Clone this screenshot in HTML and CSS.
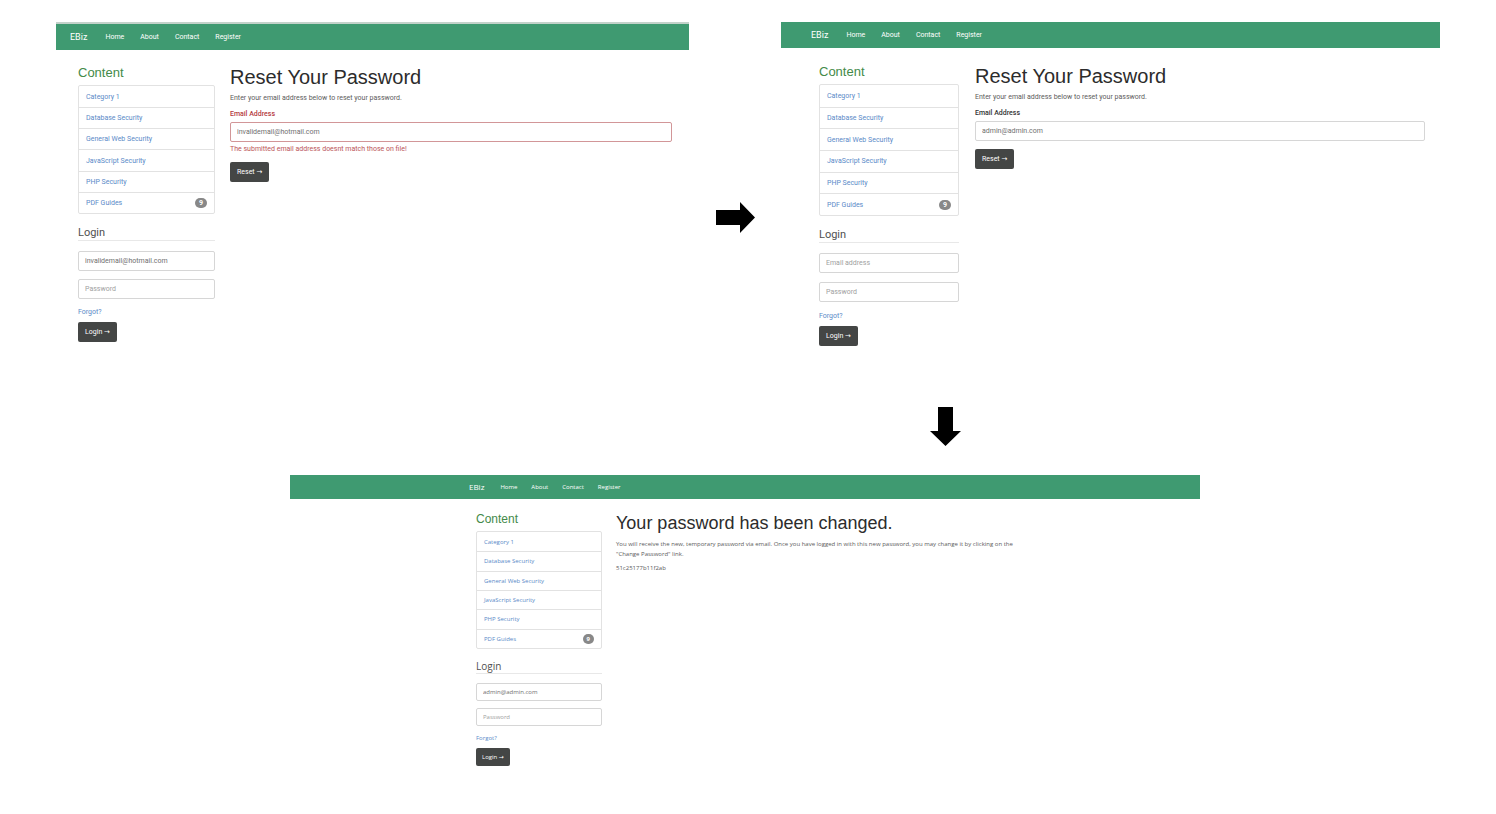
FILE: index.html
```html
<!DOCTYPE html>
<html lang="en">
<head>
<meta charset="utf-8">
<title>EBiz password reset</title>
<link rel="stylesheet" href="styles.css">
</head>
<body>
<main class="flow">
  <div class="top-row">
    <section class="panel panel-invalid">
      <nav class="navbar">
        <a class="brand" href="#">EBiz</a>
        <a href="#">Home</a>
        <a href="#">About</a>
        <a href="#">Contact</a>
        <a href="#">Register</a>
      </nav>
      <div class="panel-body">
        <aside>
          <h2 class="content-title">Content</h2>
          <ul class="category-list">
            <li><a href="#">Category 1</a></li>
            <li><a href="#">Database Security</a></li>
            <li><a href="#">General Web Security</a></li>
            <li><a href="#">JavaScript Security</a></li>
            <li><a href="#">PHP Security</a></li>
            <li><a href="#">PDF Guides</a><span class="badge">9</span></li>
          </ul>
          <form class="login">
            <h3 class="login-title">Login</h3>
            <input class="field" type="text" aria-label="Email address" placeholder="Email address" value="invalidemail@hotmail.com">
            <input class="field" type="password" aria-label="Password" placeholder="Password">
            <a class="forgot" href="#">Forgot?</a>
            <button class="btn" type="button">Login →</button>
          </form>
        </aside>
        <form class="content">
          <h1>Reset Your Password</h1>
          <p>Enter your email address below to reset your password.</p>
          <label class="invalid-text" for="email-invalid">Email Address</label>
          <input class="field field-invalid" id="email-invalid" type="text" value="invalidemail@hotmail.com">
          <p class="error">The submitted email address doesnt match those on file!</p>
          <button class="btn" type="button">Reset →</button>
        </form>
      </div>
    </section>

    <svg class="arrow-right" width="39" height="32" viewBox="0 0 39 32" aria-hidden="true"><path d="M0 8H24V0L39 15.500L24 31V23H0Z"/></svg>

    <section class="panel panel-valid">
      <nav class="navbar">
        <a class="brand" href="#">EBiz</a>
        <a href="#">Home</a>
        <a href="#">About</a>
        <a href="#">Contact</a>
        <a href="#">Register</a>
      </nav>
      <div class="panel-body">
        <aside>
          <h2 class="content-title">Content</h2>
          <ul class="category-list">
            <li><a href="#">Category 1</a></li>
            <li><a href="#">Database Security</a></li>
            <li><a href="#">General Web Security</a></li>
            <li><a href="#">JavaScript Security</a></li>
            <li><a href="#">PHP Security</a></li>
            <li><a href="#">PDF Guides</a><span class="badge">9</span></li>
          </ul>
          <form class="login">
            <h3 class="login-title">Login</h3>
            <input class="field" type="text" aria-label="Email address" placeholder="Email address">
            <input class="field" type="password" aria-label="Password" placeholder="Password">
            <a class="forgot" href="#">Forgot?</a>
            <button class="btn" type="button">Login →</button>
          </form>
        </aside>
        <form class="content">
          <h1>Reset Your Password</h1>
          <p>Enter your email address below to reset your password.</p>
          <label for="email-valid">Email Address</label>
          <input class="field" id="email-valid" type="text" value="admin@admin.com">
          <button class="btn" type="button">Reset →</button>
        </form>
      </div>
    </section>
  </div>

  <div class="arrow-row">
    <svg class="arrow-down" width="31" height="39" viewBox="0 0 31 39" aria-hidden="true"><path d="M8 0H23V24H31L15.500 39L0 24H8Z"/></svg>
  </div>

  <div class="bottom-row">
    <section class="panel panel-done">
      <nav class="navbar">
        <a class="brand" href="#">EBiz</a>
        <a href="#">Home</a>
        <a href="#">About</a>
        <a href="#">Contact</a>
        <a href="#">Register</a>
      </nav>
      <div class="panel-body">
        <aside>
          <h2 class="content-title">Content</h2>
          <ul class="category-list">
            <li><a href="#">Category 1</a></li>
            <li><a href="#">Database Security</a></li>
            <li><a href="#">General Web Security</a></li>
            <li><a href="#">JavaScript Security</a></li>
            <li><a href="#">PHP Security</a></li>
            <li><a href="#">PDF Guides</a><span class="badge">9</span></li>
          </ul>
          <form class="login">
            <h3 class="login-title">Login</h3>
            <input class="field" type="text" aria-label="Email address" placeholder="Email address" value="admin@admin.com">
            <input class="field" type="password" aria-label="Password" placeholder="Password">
            <a class="forgot" href="#">Forgot?</a>
            <button class="btn" type="button">Login →</button>
          </form>
        </aside>
        <div class="content">
          <h1>Your password has been changed.</h1>
          <p>You will receive the new, temporary password via email. Once you have logged in with this new password, you may change it by clicking on the "Change Password" link.</p>
          <p>51c25177b11f2ab</p>
        </div>
      </div>
    </section>
  </div>
</main>
</body>
</html>
```

FILE: styles.css
```css
* {
  box-sizing: border-box;
}

body {
  margin: 0;
  background: #fff;
  color: #5c5c5c;
  font: 7px/10px Roboto, "DejaVu Sans", sans-serif;
}

h1, h2, h3, p, ul {
  margin: 0;
  padding: 0;
}

a {
  color: #5a8ac8;
  text-decoration: none;
}

.flow {
  padding: 22px 0 48px;
}

.top-row {
  display: grid;
  grid-template-columns: 633fr 92px 659fr;
  padding: 0 56px;
  min-height: 385px;
}

.arrow-right {
  margin: 180px 0 0 27px;
}

.arrow-row,
.bottom-row {
  display: grid;
}

.arrow-row {
  grid-template-columns: 930fr 566fr;
  padding-bottom: 29px;
}

.arrow-down {
  grid-column: 2;
}

.bottom-row {
  grid-template-columns: 290fr 910fr 296fr;
}

/* Panel metrics */
.panel {
  --pad-top: 15px;
  --pad-left: 22px;
  --pad-right: 17px;
  --nav-left: 14px;
  --nav-height: 26px;
  --columns: 137fr 442fr;
  --col-gap: 15px;
  --list-height: 129px;
  --field-height: 20px;
  --field-gap: 8px;
  --login-gap: 10px;
  --btn-pad: 7px;
  --title: 20px;
  --subtitle: 13px;
  --heading: 11px;
  --brand: 9px;
}

.panel-invalid {
  border-top: 2px solid #c3d2ca;
}

.panel-valid {
  --pad-top: 16px;
  --pad-left: 38px;
  --pad-right: 15px;
  --nav-left: 30px;
  --columns: 140fr 450fr;
  --col-gap: 16px;
  --list-height: 132px;
  --field-gap: 9px;
}

.panel-done {
  --pad-top: 12px;
  --pad-left: 186px;
  --pad-right: 180px;
  --nav-left: 179px;
  --nav-height: 24px;
  --columns: 126fr 404fr;
  --col-gap: 14px;
  --list-height: 118px;
  --field-height: 18px;
  --field-gap: 7px;
  --login-gap: 9px;
  --btn-pad: 6px;
  --title: 18px;
  --subtitle: 12px;
  --heading: 10px;
  --brand: 8px;
  grid-column: 2;
  font-family: "Open Sans", "DejaVu Sans", sans-serif;
  font-size: 6px;
}

.navbar {
  display: flex;
  align-items: center;
  gap: 16px;
  height: var(--nav-height);
  padding-left: var(--nav-left);
  background: #3f9a71;
}

.panel-done .navbar {
  gap: 14px;
}

.navbar a {
  color: #fff;
}

.navbar .brand {
  margin-right: 2px;
  font-size: var(--brand);
}

.panel-body {
  display: grid;
  grid-template-columns: var(--columns);
  gap: var(--col-gap);
  padding: var(--pad-top) var(--pad-right) 0 var(--pad-left);
}

.content-title {
  margin-bottom: 4px;
  color: #448a49;
  font: var(--subtitle)/16px "Liberation Sans", Arial, sans-serif;
}

.category-list {
  display: grid;
  grid-auto-rows: 1fr;
  min-height: var(--list-height);
  border: 1px solid #e2e2e2;
  border-radius: 2px;
  list-style: none;
}

.category-list li {
  display: flex;
  align-items: center;
  justify-content: space-between;
  padding: 0 7px;
}

.category-list li + li {
  border-top: 1px solid #e2e2e2;
}

.badge {
  padding: 0 4px;
  border-radius: 5px;
  background: #888;
  color: #fff;
  font-weight: 700;
}

.login {
  display: flex;
  flex-direction: column;
  align-items: flex-start;
  margin-top: 12px;
}

.panel-done .login {
  margin-top: 10px;
}

.login-title {
  width: 100%;
  margin-bottom: var(--login-gap);
  border-bottom: 1px solid #e8e8e8;
  color: #505050;
  font-size: var(--heading);
  font-weight: 400;
  line-height: 14px;
}

.field {
  display: block;
  width: 100%;
  height: var(--field-height);
  padding: 0 6px;
  border: 1px solid #d6d6d6;
  border-radius: 2px;
  background: #fff;
  color: #707070;
  font: inherit;
}

.field::placeholder {
  color: #a0a0a0;
}

.login .field {
  margin-bottom: var(--field-gap);
}

.forgot {
  margin-bottom: 5px;
}

.btn {
  height: var(--field-height);
  padding: 0 var(--btn-pad);
  border: 0;
  border-radius: 2px;
  background: #444645;
  color: #fff;
  font: inherit;
}

.content h1 {
  margin-bottom: 4px;
  color: #2c2c2c;
  font: var(--title)/24px "Liberation Sans", Arial, sans-serif;
}

.content p {
  margin-bottom: 6px;
}

.panel-done .content p {
  margin-bottom: 4px;
}

.content label {
  display: block;
  margin-bottom: 3px;
  color: #333;
  font-weight: 500;
}

.content .invalid-text {
  color: #b53a3e;
}

.content .field {
  margin-bottom: 8px;
}

.content .field-invalid {
  margin-bottom: 2px;
  border-color: #d29698;
}

.content .error {
  margin-bottom: 8px;
  color: #bb5558;
}
```
